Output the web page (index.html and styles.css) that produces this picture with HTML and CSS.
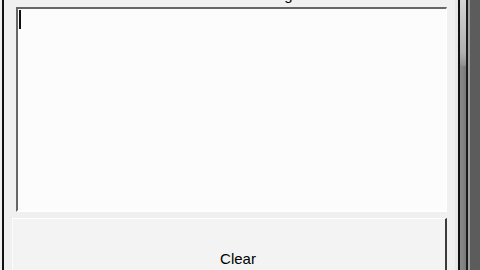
FILE: index.html
```html
<!DOCTYPE html>
<html lang="en">
<head>
    <meta charset="UTF-8">
    <meta name="viewport" content="width=device-width, initial-scale=1.0">
    <title>Message</title>
    <link rel="stylesheet" href="styles.css">
</head>
<body>
    <!-- Dialog body -->
    <div class="window">
        <div class="content">
            <div class="label">Message</div>

            <!-- Message box -->
            <div class="textbox">
                <span class="caret"></span>
            </div>

            <!-- Clear button -->
            <div class="btn">Clear</div>
        </div>

        <!-- Right frame / scrollbar -->
        <div class="scrollbar">
            <div class="thumb"></div>
        </div>
    </div>
</body>
</html>
```

FILE: styles.css
```css
/* Reset */
* {
    margin: 0;
    padding: 0;
    box-sizing: border-box;
}

body {
    font-family: 'Liberation Sans', Arial, sans-serif;
    background-color: #f0f0f0;
    color: #000;
    width: 480px;
    height: 270px;
    overflow: hidden;
}

.window {
    display: flex;
    height: 270px;
}

/* Main area */
.content {
    flex: 1;
    margin-left: 2px;
    border-left: 2px solid #111;
    padding: 0 8px 0 12px;
    display: flex;
    flex-direction: column;
}

.content > * {
    flex-shrink: 0;
}

.label {
    font-size: 15px;
    line-height: 16px;
    height: 16px;
    margin-top: -13px;
    padding-left: 224px;
}

.textbox {
    margin-top: 4px;
    height: 205px;
    background-color: #fcfcfc;
    border-top: 2px solid #666;
    border-left: 2px solid #666;
    border-right: 1px solid #fff;
    border-bottom: 2px solid #fff;
    padding: 1px 0 0 1px;
}

.caret {
    display: block;
    width: 2px;
    height: 19px;
    background-color: #111;
}

.btn {
    margin-top: 6px;
    margin-left: -4px;
    height: 52px;
    background-color: #f3f3f3;
    border-top: 1px solid #fff;
    border-left: 1px solid #fbfbfb;
    border-right: 2px solid #3c3c3c;
    text-align: center;
    font-size: 15px;
    line-height: 18px;
    padding: 31px 0 0 18px;
}

/* Scrollbar strip */
.scrollbar {
    width: 25px;
    background: linear-gradient(to right,
        #e8e8e8 0, #e8e8e8 3px,
        #111 3px, #111 5px,
        #8a8a8a 5px, #7a7a7a 11px,
        #1a1a1a 11px, #1a1a1a 13px,
        #a0a0a0 13px, #a0a0a0 15px,
        #5c5c5c 15px, #5c5c5c 25px);
}

.thumb {
    margin-left: 5px;
    width: 6px;
    height: 66px;
    background: linear-gradient(to bottom, #d4d4d4, #b0b0b0 80%, #909090);
}
```
